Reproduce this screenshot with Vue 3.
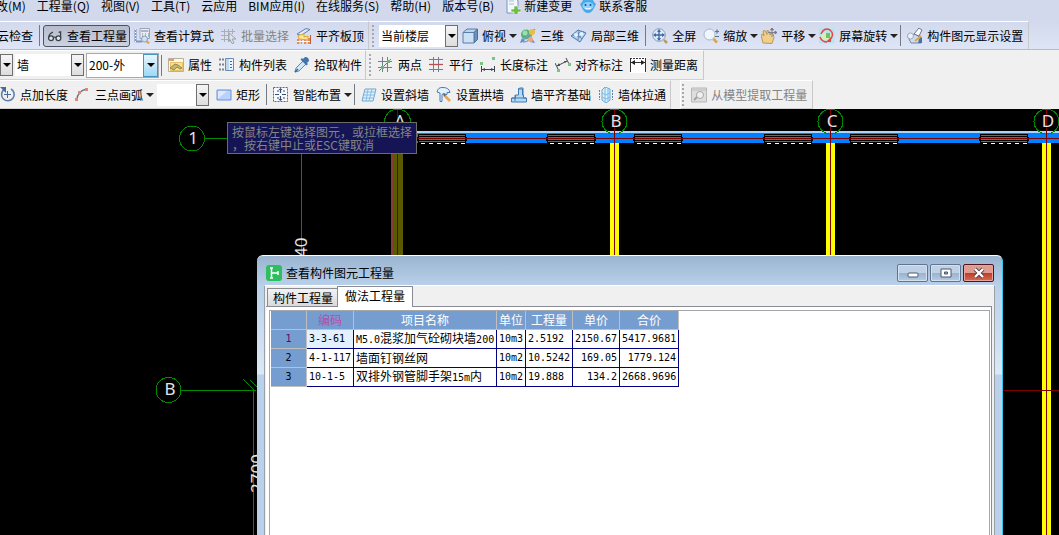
<script setup>
import { ref } from 'vue'

const menus = ['改(M)', '工程量(Q)', '视图(V)', '工具(T)', '云应用', 'BIM应用(I)', '在线服务(S)', '帮助(H)', '版本号(B)']

const floorTools = [
  { label: '查看计算式', icon: 'formula' },
  { label: '批量选择', icon: 'batch', disabled: true },
  { label: '平齐板顶', icon: 'slab' },
]
const viewTools = [
  { label: '俯视', icon: 'cube', drop: true },
  { label: '三维', icon: 'orbit' },
  { label: '局部三维', icon: 'part3d' },
  { sep: true },
  { label: '全屏', icon: 'full' },
  { label: '缩放', icon: 'zoom', drop: true },
  { label: '平移', icon: 'pan', drop: true },
  { label: '屏幕旋转', icon: 'rotate', drop: true },
  { sep: true },
  { label: '构件图元显示设置', icon: 'display' },
]
const partTools = [
  { label: '属性', icon: 'props' },
  { label: '构件列表', icon: 'list' },
  { label: '拾取构件', icon: 'picker' },
]
const axisTools = [
  { label: '两点', icon: 'twopoint' },
  { label: '平行', icon: 'parallel' },
  { label: '长度标注', icon: 'length' },
  { label: '对齐标注', icon: 'align' },
  { label: '测量距离', icon: 'measure' },
]
const drawTools = [
  { label: '点加长度', icon: 'pointlen' },
  { label: '三点画弧', icon: 'arc', drop: true },
]
const wallTools = [
  { label: '矩形', icon: 'rect' },
  { sep: true },
  { label: '智能布置', icon: 'smart', drop: true },
  { sep: true },
  { label: '设置斜墙', icon: 'slope' },
  { label: '设置拱墙', icon: 'arch' },
  { label: '墙平齐基础', icon: 'base' },
  { label: '墙体拉通', icon: 'through' },
]
const modelTools = [{ label: '从模型提取工程量', icon: 'extract', disabled: true }]

const rows = [
  { code: '3-3-61', name: [['M5.0', 1], ['混浆加气砼砌块墙', 0], ['200', 1]], unit: '10m3', qty: '2.5192', price: '2150.67', total: '5417.9681' },
  { code: '4-1-117', name: [['墙面钉钢丝网', 0]], unit: '10m2', qty: '10.5242', price: '169.05', total: '1779.124' },
  { code: '10-1-5', name: [['双排外钢管脚手架', 0], ['15m', 1], ['内', 0]], unit: '10m2', qty: '19.888', price: '134.2', total: '2668.9696' },
]
const columns = ['编码', '项目名称', '单位', '工程量', '单价', '合价']
const tabs = ['构件工程量', '做法工程量']
const activeTab = ref(1)

const openings = [418, 547, 634, 764, 850, 980]
const axes = [
  { name: 'B', x: 614, end: 146 },
  { name: 'C', x: 830, end: 146 },
  { name: 'D', x: 1046, end: 2000 },
]
</script>

<template>
  <div class="app">
    <svg class="defs" aria-hidden="true">
      <symbol id="i-glasses" viewBox="0 0 16 16"><g fill="#dfe6ee" stroke="#3c4148" stroke-width="1.3"><path d="M1.8 9.5C2 6.5 3.5 5 6 4.2M13.6 9.5V3.8l-2 .5" fill="none"/><circle cx="4" cy="10.2" r="2.4"/><circle cx="11.4" cy="10.2" r="2.4"/><path d="M6.4 9.6q1.3-1 2.6 0"/></g></symbol>
      <symbol id="i-formula" viewBox="0 0 16 16"><path d="M1.5 1v13M1.5 13.500H8" stroke="#7d93c4" stroke-width="2"/><path d="M1.500 1v13" stroke="#fff" stroke-dasharray="1 2"/><path d="M6 .5h9.500v10H6z" fill="#e9eef5" stroke="#9aa5b5"/><path d="M7 2h7.500v2H7z" fill="#a9b6c9"/><path d="M8 6h1m2 0h1m2 0h1M8 8h1m2 0h1m2 0h1" stroke="#6b7a95"/><circle cx="10.500" cy="11" r="3" fill="#cde2f5" stroke="#8a9bb5"/><path d="M12.500 13l2.500 2.500" stroke="#e6a33c" stroke-width="2.200"/></symbol>
      <symbol id="i-batch" viewBox="0 0 16 16"><path d="M0 3.500h14M0 7.500h8M0 11.500h8M3.500 1v13M7.500 1v13M11.500 1v5" stroke="#a9aeb9"/><path d="M8 5l7 6h-4l2 4-2 .5-2-4-1 2z" fill="#e2e5ec" stroke="#9aa0ac"/></symbol>
      <symbol id="i-slab" viewBox="0 0 16 16"><path d="M1 6l9-5.500 4 1-9 6z" fill="#dce7f5" stroke="#5e82b5"/><path d="M1 11h5v5H1zM8 10h7v6H8z" fill="#e08a62"/><path d="M1 13.500h14M4 11v5M11 10v6" stroke="#fff"/><path d="M2 7.500L8 6v3l4-1v4l-9-1z" fill="#ffe491" stroke="#e0a62e"/><path d="M14.500 7v9" stroke="#be5b3b"/></symbol>
      <symbol id="i-cube" viewBox="0 0 16 16"><path d="M1 4.500L5 1h10.500L12 4.500z" fill="#b9d5ee" stroke="#587da6"/><path d="M12 4.500L15.500 1v10.500L12 15z" fill="#6b93bf" stroke="#486e99"/><path d="M1 4.500h11V15H1z" fill="#cbe2f4" stroke="#587da6"/></symbol>
      <symbol id="i-orbit" viewBox="0 0 16 16"><circle cx="6" cy="6.500" r="5" fill="#51b474"/><circle cx="5" cy="5" r="2.500" fill="#9ae0a7"/><path d="M1 14L15 1M3 14q8 0 9-9" stroke="#789bc7" stroke-width="1.300" fill="none"/><path d="M0 15l2-5 3 3zM12 10l3 5-5-1z" fill="#688dc0"/><circle cx="12" cy="4" r="3" fill="#e8bf42"/><circle cx="10.500" cy="11.500" r="2.500" fill="#eda67d"/></symbol>
      <symbol id="i-part3d" viewBox="0 0 16 16"><path d="M0 8l7-6 8 3-6 9z" fill="#b7d1eb" stroke="#507bae"/><path d="M4 4.500l7 6.500M1 7l8 2 4-6M3 9l8-6M8 2l-1 10" stroke="#5f8cbe" fill="none"/><circle cx="5" cy="7" r="2" fill="#e7f3fd"/><circle cx="10.500" cy="6" r="2" fill="#e7f3fd"/></symbol>
      <symbol id="i-full" viewBox="0 0 16 16"><circle cx="7" cy="7" r="6.300" fill="#dbe8f7" stroke="#8c9bb4"/><path d="M7 2v10M2 7h10" stroke="#4169a5" stroke-width="1.300"/><path d="M7 1L5 4h4zM7 13l-2-3h4zM1 7l3-2v4zM13 7l-3-2v4z" fill="#4169a5"/><path d="M12 12l3 3" stroke="#c69759" stroke-width="2.500"/></symbol>
      <symbol id="i-zoom" viewBox="0 0 16 16"><circle cx="6.500" cy="6.500" r="5.500" fill="#eef5fc" stroke="#a9b5c7"/><path d="M10.500 11l3.500 3.500" stroke="#dba64c" stroke-width="2.600"/><path d="M12 3.500h4M14 1.500v4M12 8.500h4" stroke="#51739f" stroke-width="1.200"/></symbol>
      <symbol id="i-pan" viewBox="0 0 16 16"><path d="M2 15l-2-8 2-1 1 2-1-5 2-.5 2 4 0-4 2 .5 1 4 1-2 2 .5 1 4-2 6z" fill="#f0cf8d" stroke="#bf9453"/><path d="M11 0v9M7 4.500h9M11 0L9.500 2h3zM16 4.500l-2-1.500v3z" stroke="#707b8c" fill="#707b8c" stroke-width=".9"/></symbol>
      <symbol id="i-rotate" viewBox="0 0 16 16"><path d="M0 0h15.500v15.500H0z" fill="#b8e4ef"/><path d="M2 5h10v7H2z" fill="#d9efb2"/><path d="M7 5h4v5H7z" fill="#76bf68"/><path d="M2 6Q5-1 11 2q5 4 0 10M1 9q2 5 7 5" fill="none" stroke="#e5434a" stroke-width="1.500"/><path d="M12 9v5H7z" fill="#e5434a"/></symbol>
      <symbol id="i-display" viewBox="0 0 16 16"><path d="M1 9l7-3 6 4v5H4z" fill="#cddcf0" stroke="#6d87b1"/><path d="M7 6L12 0l3 2-3 6z" fill="#fff" stroke="#64728e"/><path d="M8 13l6-5" stroke="#dfa548" stroke-width="2"/><circle cx="3.500" cy="8" r="3" fill="#edf3fa" stroke="#9ba7b9"/><path d="M12 11l3-2v6h-4z" fill="#4b71a4"/></symbol>
      <symbol id="i-props" viewBox="0 0 16 16"><path d="M.5 1.500h15v13H.5z" fill="#fff8e8" stroke="#b8b09c"/><path d="M1 2h5v2H1z" fill="#e59a6d"/><path d="M2.500 5.500h12v8h-12z" fill="#ffe08a" stroke="#e5c268"/><path d="M2 11l5-4 3 1 4 3-2 1-3-2-3 3z" fill="#c5b56c" stroke="#7b794f" stroke-width=".8"/></symbol>
      <symbol id="i-list" viewBox="0 0 16 16"><path d="M0 2.500h5M0 7.500h5M0 12.500h5" stroke="#7a8492" stroke-width="2" stroke-dasharray="2 1"/><path d="M6.500 1.500h8v12h-8z" fill="#edf4fc" stroke="#678bbd"/><path d="M7 2h3v11H7z" fill="#c0d6ef"/><path d="M11 4.500h2M11 7.500h2M11 10.500h2" stroke="#48658e"/></symbol>
      <symbol id="i-picker" viewBox="0 0 16 16"><path d="M1 15l1-4 7-7 3 3-7 7z" fill="#cde8fa" stroke="#5d87b5"/><path d="M9 2l2-2q4 0 4 4l-2 2 1 1-1.500 1.500-6-6L8 1z" fill="#4176ac"/><path d="M1 15l3-3" stroke="#316797" stroke-width="1.500"/></symbol>
      <symbol id="i-twopoint" viewBox="0 0 16 16"><path d="M4.500 0v15M9.500 0v15M0 4.500h14M0 10.500h14" stroke="#777b92"/><path d="M1 14L13 2" stroke="#bf4f4b"/><path d="M9 3h3v3H9zM3 9h3v3H3z" fill="#67b774"/></symbol>
      <symbol id="i-parallel" viewBox="0 0 16 16"><path d="M4.500 0v15M9.500 0v15M0 2.500h14M0 12.500h14" stroke="#777b92"/><path d="M0 7.500h14" stroke="#bb514e" stroke-width="1.300"/></symbol>
      <symbol id="i-length" viewBox="0 0 16 16"><path d="M1.500 9v6M14.500 9v6M2 12.500h12" stroke="#3f454d"/><path d="M2 12.500l3-1.500v3zM14 12.500L11 11v3z" fill="#3f454d"/><path d="M0 5h3v3H0zM12 0h3v3h-3z" fill="#77c57f"/></symbol>
      <symbol id="i-align" viewBox="0 0 16 16"><path d="M0 6l3 6M11 1l3 6M2 9l10-5" stroke="#3f454d"/><path d="M2 9l2-3 1 3zM12 4L9 4l1 2z" fill="#3f454d"/><path d="M2 12h3v3H2zM13 6h3v3h-3z" fill="#77c57f"/></symbol>
      <symbol id="i-measure" viewBox="0 0 16 16"><path d="M0 0h16v16H0z" fill="#fff"/><path d="M0 1.500h16" stroke="#333" stroke-dasharray="2 1"/><path d="M.5 2v13M15.500 2v13M1 5.500h14" stroke="#333"/><path d="M1 5.500L5 3v5zM15 5.500L11 3v5z" fill="#222"/></symbol>
      <symbol id="i-pointlen" viewBox="0 0 16 16"><path d="M4 2.500A6.300 6.300 0 1 0 11 2" fill="none" stroke="#5d7eaa" stroke-width="1.600"/><path d="M0 0h6v6z" fill="#456b9d"/><path d="M7.500 4v7M4 7.500h7" stroke="#456b9d"/></symbol>
      <symbol id="i-arc" viewBox="0 0 16 16"><path d="M2 13Q2 4 12 2" fill="none" stroke="#68758f" stroke-width="1.300"/><path d="M0 11h3v3H0zM3 4h3v3H3zM10 1h3v3h-3z" fill="#e28673"/></symbol>
      <symbol id="i-rect" viewBox="0 0 16 16"><path d="M1 3h14v10H1z" fill="#b9d2fa" stroke="#6b8fda"/><path d="M2 4h9l-8 7H2z" fill="#dce9ff"/></symbol>
      <symbol id="i-smart" viewBox="0 0 16 16"><rect x=".5" y=".5" width="14" height="14" fill="#f7f9fc" stroke="#53698d" stroke-dasharray="2 1"/><path d="M7.500 2v4M7.500 9v4M2 7.500h4M9 7.500h4M4 4h2M10 4h2M4 11h2M10 11h2" stroke="#334c78" stroke-width="1.200"/><path d="M7.500 1l-2 2h4zM7.500 14l-2-2h4z" fill="#334c78"/></symbol>
      <symbol id="i-slope" viewBox="0 0 16 16"><path d="M4 2h11l-3 12H1z" fill="#dff1fd" stroke="#6ca5d2"/><path d="M4 5h10M3 8h10M2 11h10M7 2L5 14M11 2L8 14" stroke="#89bce0"/></symbol>
      <symbol id="i-arch" viewBox="0 0 16 16"><path d="M1 5Q2 0 7 .5q6 0 7 5h-3v2h-1q-2-2-4 0v7H4V6z" fill="#e3f3fe" stroke="#457eb5"/><path d="M9 9l5 5" stroke="#e1a75a" stroke-width="2.500"/><path d="M7 6l3 2-2 2z" fill="#82543b"/></symbol>
      <symbol id="i-base" viewBox="0 0 16 16"><path d="M.5 11h4V8h3V2h4v6h1v3h3v4H.5z" fill="#b6d9f4" stroke="#3f7bb2"/><path d="M7 2l2-1h3v7M1 11h14M4 8v6" stroke="#417db5" fill="none"/></symbol>
      <symbol id="i-through" viewBox="0 0 16 16"><path d="M4 3l3-3 5 2v11l-4 3-4-3z" fill="#d9f0fe" stroke="#66a9d6"/><path d="M7 1v14M10 2v12M4 6l4 2 4-2M4 10l4 2 4-2" stroke="#82bae0" fill="none"/><path d="M1.500 3v10M14.500 3v10" stroke="#5a87b0" stroke-dasharray="2 1"/></symbol>
      <symbol id="i-extract" viewBox="0 0 16 16"><path d="M.5 1h15v14H.5z" fill="#dedede" stroke="#b7b7b7"/><path d="M1 3h14" stroke="#bdbdbd"/><circle cx="9" cy="8" r="3.500" fill="#f1f1f1" stroke="#a6a6a6"/><path d="M6 10l-3 3" stroke="#a2a2a2" stroke-width="2"/></symbol>
      <symbol id="i-newdoc" viewBox="0 0 16 16"><path d="M2 0h9l2 3v12H2z" fill="#f1f7fd" stroke="#7697b9"/><path d="M4 3h5M4 6h5" stroke="#a7bdd4"/><path d="M9 8h4v3h3v3h-3v3H9v-3H6v-3h3z" fill="#6fbd42" stroke="#fff" stroke-width=".6"/></symbol>
      <symbol id="i-service" viewBox="0 0 16 16"><path d="M2 4Q4-1 8 1q4-2 6 3l2 2-2 4q-2 5-6 5t-6-5L0 6z" fill="#4aa9ea"/><ellipse cx="8" cy="8" rx="5.500" ry="4" fill="#8dd0fa"/><circle cx="5.500" cy="7" r="1" fill="#174f88"/><circle cx="10.500" cy="7" r="1" fill="#174f88"/><path d="M5 10q3 2 6 0" stroke="#fff" fill="none"/></symbol>
    </svg>

    <header>
      <nav class="menubar">
        <button v-for="m in menus" :key="m" class="menu">{{ m }}</button>
        <button class="tool new"><svg class="icon"><use href="#i-newdoc" /></svg>新建变更</button>
        <button class="tool"><svg class="icon"><use href="#i-service" /></svg>联系客服</button>
      </nav>

      <div class="row blue">
        <div class="bar floor">
          <button class="tool cloud">云检查</button>
          <i class="sep"></i>
          <button class="tool pressed"><svg class="icon"><use href="#i-glasses" /></svg>查看工程量</button>
          <button v-for="t in floorTools" :key="t.label" class="tool" :disabled="t.disabled"><svg class="icon"><use :href="'#i-' + t.icon" /></svg>{{ t.label }}</button>
        </div>
        <div class="bar">
          <i class="grip"></i>
          <label class="combo story"><select aria-label="楼层"><option>当前楼层</option></select><i class="arrow"></i></label>
          <template v-for="(t, n) in viewTools" :key="n">
            <i v-if="t.sep" class="sep"></i>
            <button v-else class="tool" :class="{ drop: t.drop }"><svg class="icon"><use :href="'#i-' + t.icon" /></svg>{{ t.label }}</button>
          </template>
        </div>
      </div>

      <div class="row">
        <div class="bar parts">
          <label class="combo stub"><select aria-label="专业"><option></option></select><i class="arrow"></i></label>
          <label class="combo kind"><select aria-label="构件类型"><option>墙</option></select><i class="arrow"></i></label>
          <label class="combo member"><select aria-label="构件"><option>200-外</option></select><i class="arrow"></i></label>
          <i class="sep"></i>
          <button v-for="t in partTools" :key="t.label" class="tool"><svg class="icon"><use :href="'#i-' + t.icon" /></svg>{{ t.label }}</button>
        </div>
        <div class="bar">
          <i class="grip"></i>
          <button v-for="t in axisTools" :key="t.label" class="tool"><svg class="icon"><use :href="'#i-' + t.icon" /></svg>{{ t.label }}</button>
        </div>
      </div>

      <div class="row last">
        <div class="bar draw">
          <button v-for="t in drawTools" :key="t.label" class="tool" :class="{ drop: t.drop }"><svg class="icon"><use :href="'#i-' + t.icon" /></svg>{{ t.label }}</button>
          <label class="combo method"><select aria-label="绘制方式"><option></option></select><i class="arrow"></i></label>
          <template v-for="(t, n) in wallTools" :key="n">
            <i v-if="t.sep" class="sep"></i>
            <button v-else class="tool" :class="{ drop: t.drop }"><svg class="icon"><use :href="'#i-' + t.icon" /></svg>{{ t.label }}</button>
          </template>
        </div>
        <div class="bar model">
          <i class="grip"></i>
          <button v-for="t in modelTools" :key="t.label" class="tool" disabled><svg class="icon"><use :href="'#i-' + t.icon" /></svg>{{ t.label }}</button>
        </div>
      </div>
    </header>

    <main class="canvas">
      <svg class="drawing" width="100%" height="100%">
        <g class="green">
          <circle cx="192" cy="29.500" r="12.500" />
          <path d="M205 29.500h24M301.500 44v110" />
          <circle cx="397.500" cy="13" r="13" />
          <circle cx="168.500" cy="281" r="12.500" />
          <path d="M181 281.500h75M253.500 281v2000M243 270l12 12M250 271l7 7" />
        </g>
        <rect x="400" y="22" width="100%" height="2" fill="#a6d5ff" />
        <rect x="400" y="24" width="100%" height="10" fill="#0080ff" />
        <g v-for="x in openings" :key="x" shape-rendering="crispEdges">
          <path :d="`M${x} 25.500h47v8h-47zM${x} 27.500h47M${x} 31.500h47M${x - 1} 28v4M${x + 48} 28v4`" fill="none" stroke="#000" />
          <path :d="`M${x + 3} 34.500h44`" stroke="#fff" stroke-dasharray="4 4" />
        </g>
        <path d="M391 34h2v120h-2z" fill="#8b3a3a" />
        <path d="M393 34h10v120h-10z" fill="#5a5a00" />
        <g v-for="a in axes" :key="a.name">
          <circle class="green" :cx="a.x + .5" cy="12.500" r="12.500" />
          <rect :x="a.x - 4" y="34" width="9" :height="a.end - 34" fill="#ff0" />
          <path class="red" :d="`M${a.x + .5} 1V${a.end}`" />
          <text :x="a.x + 2" y="18" text-anchor="middle">{{ a.name }}</text>
        </g>
        <path class="red" d="M400 29.500h2000M397.500 1v153M990 281.500h1200" />
        <text x="400" y="18" text-anchor="middle">A</text>
        <text x="193" y="35" text-anchor="middle">1</text>
        <text x="170" y="286" text-anchor="middle">B</text>
        <text transform="translate(307 148) rotate(-90)">40</text>
        <text transform="translate(263 384) rotate(-90)">2700</text>
      </svg>

      <p class="hint">按鼠标左键选择图元，或拉框选择，按右键中止或ESC键取消</p>

      <section class="dialog" role="dialog" aria-labelledby="dlg-title">
        <div class="titlebar">
          <svg class="logo" viewBox="0 0 16 16"><rect width="16" height="16" rx="3" fill="#2dbe60" /><path d="M4 3h3M4 13h3M5.500 3v10M6 8h6M12 6v4" stroke="#fff" stroke-width="1.500" fill="none" /></svg>
          <h1 id="dlg-title">查看构件图元工程量</h1>
          <button class="win" aria-label="最小化"><svg viewBox="0 0 12 12"><rect x="1" y="6" width="10" height="4" rx="1" fill="#fff" stroke="#4d5868" /></svg></button>
          <button class="win" aria-label="最大化"><svg viewBox="0 0 12 12"><path d="M1 2h10v8H1z" fill="#fff" stroke="#4d5868" /><path d="M4.500 5h3v2h-3z" fill="#8fb0d2" stroke="#4d5868" /></svg></button>
          <button class="win close" aria-label="关闭"><svg viewBox="0 0 12 12"><path d="M2 2l8 8M10 2l-8 8" stroke="#4e3c47" stroke-width="4" /><path d="M2 2l8 8M10 2l-8 8" stroke="#fff" stroke-width="2.400" /></svg></button>
        </div>
        <div class="body">
          <div class="tabs" role="tablist">
            <button v-for="(t, n) in tabs" :key="t" role="tab" :aria-selected="activeTab === n" :class="{ on: activeTab === n }" @click="activeTab = n">{{ t }}</button>
          </div>
          <div class="page">
            <div class="sheet">
              <table>
                <colgroup><col class="c-no"><col class="c-code"><col class="c-name"><col class="c-unit"><col class="c-code"><col class="c-code"><col class="c-total"></colgroup>
                <thead>
                  <tr><th></th><th v-for="c in columns" :key="c">{{ c }}</th></tr>
                </thead>
                <tbody>
                  <tr v-for="(r, n) in rows" :key="r.code">
                    <th class="mono">{{ n + 1 }}</th>
                    <td class="mono">{{ r.code }}</td>
                    <td><span v-for="(p, k) in r.name" :key="k" :class="{ mono: p[1] }">{{ p[0] }}</span></td>
                    <td class="mono">{{ r.unit }}</td>
                    <td class="mono">{{ r.qty }}</td>
                    <td class="mono num">{{ r.price }}</td>
                    <td class="mono num">{{ r.total }}</td>
                  </tr>
                </tbody>
              </table>
            </div>
          </div>
        </div>
      </section>
    </main>
  </div>
</template>

<style>
body { margin: 0; overflow: hidden; }
</style>

<style scoped>
* { box-sizing: border-box; }
.app {
  height: 100vh;
  display: flex;
  flex-direction: column;
  overflow: hidden;
  background: #f0f0f0;
  color: #000;
  font: 12px/16px "Noto Sans CJK SC", sans-serif;
}
.defs { position: absolute; width: 0; height: 0; }
button { font: inherit; color: inherit; background: none; border: 0; padding: 0; white-space: nowrap; }
header { flex: none; }
.menubar {
  display: flex;
  align-items: center;
  gap: 11px;
  height: 21px;
  padding-bottom: 9px;
  margin-left: -4px;
  background: #d3d9ec;
}
.tool { display: flex; align-items: center; gap: 4px; flex: none; }
.menu { flex: none; }
.icon { width: 16px; height: 16px; flex: none; }
.menubar .tool { gap: 3px; }
.menubar .tool + .tool { margin-left: -3px; }
.row { display: flex; height: 30px; background: #f0f0f0; }
.row.blue { background: linear-gradient(#d3d9ec, #dee5f6); border-bottom: 1px solid #b4bccc; height: 29px; }
.row.last { height: 29px; }
.bar {
  display: flex;
  align-items: center;
  gap: 7px;
  padding: 0 5px 0 3px;
  border-top: 1px solid #fff;
  border-right: 1px solid #c8c8c8;
  border-bottom: 1px solid #d0d0d0;
}
.blue .bar { border-bottom: 0; }
.tool:disabled { color: #838383; }
.tool.cloud { margin-left: -6px; }
.tool.pressed {
  height: 22px;
  margin: 0 -3px;
  padding: 0 2px 0 3px;
  border: 1px solid #4d5460;
  border-radius: 3px;
  background: linear-gradient(#b7bccb, #ccd2e2);
}
.drop { margin-right: -4px; }
.drop::after {
  content: "";
  border: 4px solid transparent;
  border-top-color: #222;
  border-bottom: 0;
  margin-left: -1px;
}
.sep { width: 1px; height: 21px; margin: 0 -1px; background: #747982; flex: none; }
.sep + .tool.pressed { margin-left: -3px; }
.floor { padding: 0 4px 0 3px; }
.grip {
  width: 2px;
  height: 22px;
  flex: none;
  background: repeating-linear-gradient(#a5a9b1 0 2px, transparent 2px 4px);
}
.combo { display: flex; height: 22px; background: #fff; flex: none; position: relative; }
.combo select {
  appearance: none;
  flex: 1;
  min-width: 0;
  border: 0;
  border-radius: 0;
  padding: 0 2px;
  background: #fff;
  color: #000;
  font: inherit;
}
.arrow {
  width: 13px;
  border: 1px solid #6f6f6f;
  background: linear-gradient(#f5f5f5, #ddd);
  display: flex;
  align-items: center;
  justify-content: center;
  flex: none;
}
.arrow::after { content: ""; border: 4px solid transparent; border-top-color: #000; border-bottom: 0; }
.story { width: 79px; margin: 0 -3px 0 -2px; }
.parts { padding: 0 3px 0 0; }
.stub { width: 12px; }
.stub select { position: absolute; inset: 0; opacity: 0; }
.kind { width: 69px; margin-left: -4px; }
.member { width: 73px; height: 25px; margin: 0 -4px 0 -5px; border: 1px solid #a4a9b0; }
.member .arrow { width: 15px; border-color: #4096c4; background: linear-gradient(#e8f6fd, #9fd8f4); }
.draw { padding: 0 4px 0 0; }
.method { width: 52px; }
.model { margin-left: 9px; padding-left: 1px; border-left: 1px solid #fff; }

.canvas { flex: 1; position: relative; overflow: hidden; background: #000; }
.drawing { position: absolute; inset: 0; }
.green { stroke: #008a00; fill: none; shape-rendering: crispEdges; }
.red { stroke: #800000; fill: none; shape-rendering: crispEdges; }
.drawing text { fill: #e4e4e4; font: 17px "Noto Sans", sans-serif; }
.hint {
  position: absolute;
  left: 227px;
  top: 13px;
  width: 190px;
  height: 32px;
  margin: 0;
  padding: 2px 4px;
  border: 1px solid #6c6c6c;
  background: #151555;
  color: #858585;
  line-height: 13px;
  word-break: break-all;
  line-break: anywhere;
}
.dialog {
  position: absolute;
  left: 257px;
  right: 56px;
  top: 146px;
  bottom: 0;
  display: flex;
  flex-direction: column;
  padding: 0 7px;
  border-top: 1px solid #fff;
  border-right: 1px solid #35c8ee;
  border-radius: 6px 6px 0 0;
  background: linear-gradient(#9ab4d0, #b9d1ea 30px, #dce8f5 118px, #b9d1ea 119px);
}
.titlebar { display: flex; align-items: center; gap: 2px; height: 29px; padding: 4px 1px 0 2px; flex: none; }
.logo { width: 16px; height: 16px; }
h1 { flex: 1; margin: 0 0 0 2px; font: inherit; }
.win {
  width: 31px;
  height: 18px;
  display: flex;
  justify-content: center;
  align-items: center;
  border: 1px solid #62738b;
  border-radius: 2px;
  box-shadow: inset 0 0 0 1px #d3e1f0;
  background: linear-gradient(#bed1e6 50%, #98b3d0 50%, #b4cbe3);
}
.win svg { width: 12px; height: 12px; }
.win.close {
  border-color: #4f1420;
  box-shadow: inset 0 0 0 1px #e6a49b;
  background: linear-gradient(#e09c90 50%, #bd3b25 50%, #d36c58);
}
.body {
  flex: 1;
  display: flex;
  flex-direction: column;
  border-left: 1px solid #9aa0a8;
  border-right: 1px solid #9aa0a8;
  border-top: 1px solid #fff;
  background: #f0f0f0;
  padding: 0 2px 0 1px;
}
.tabs { display: flex; align-items: flex-end; height: 20px; padding-left: 1px; position: relative; z-index: 1; }
.tabs button {
  height: 18px;
  padding: 0 4px 0 5px;
  border: 1px solid #898c95;
  border-bottom: 0;
  background: linear-gradient(#f3f3f3, #d9d9d9);
}
.tabs button.on { height: 21px; margin: 0 0 -1px -1px; padding: 0 7px 2px 7px; background: #fff; }
.page { flex: 1; display: flex; border: 1px solid #898c95; border-width: 1px 1px 0 0; background: #fff; padding: 3px 1px 0 3px; }
.sheet { flex: 1; border: 1px solid #a4a8ad; border-bottom: 0; padding: 1px 0 0 1px; }
table { border-collapse: separate; border-spacing: 0; table-layout: fixed; width: 408px; }
.c-no { width: 36px; }
.c-code { width: 47px; }
.c-name { width: 143px; }
.c-unit { width: 29px; }
.c-total { width: 59px; }
th, td { height: 19px; padding: 0 2px; line-height: 16px; white-space: nowrap; font-weight: 400; overflow: hidden; }
th { background: #769dcf; color: #fff; border-right: 1px solid #c0c0c0; border-bottom: 1px solid #c0c0c0; text-align: center; }
thead th:nth-child(2) { color: #b14fae; }
tbody th { color: #000; }
tbody tr:first-child th { color: #6b006b; }
td { border-right: 1px solid #000080; border-bottom: 1px solid #000080; background: #fff; text-align: left; }
tbody tr:first-child td:nth-child(2) { background: #e2f0ff; }
.mono { font-family: "DejaVu Sans Mono", "Liberation Mono", monospace; font-size: 10px; }
.num { text-align: right; }
.sheet { padding-top: 0; }
</style>
